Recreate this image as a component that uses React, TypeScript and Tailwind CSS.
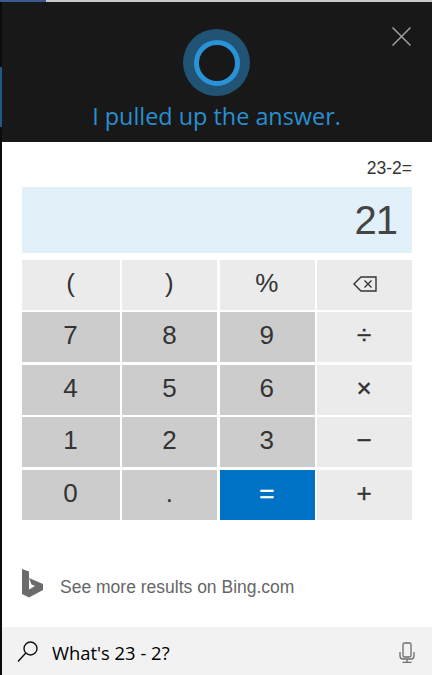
const keys: { label: React.ReactNode; tone: "light" | "dark" | "blue"; cls?: string }[] = [
  { label: "(", tone: "light" },
  { label: ")", tone: "light" },
  { label: "%", tone: "light" },
  {
    label: (
      <svg className="ml-[2px]" width="24" height="18" viewBox="0 0 24 18" fill="none" stroke="#333" strokeWidth="1.4">
        <path d="M23 2H8L1 9l7 7h15z" />
        <path d="M11.5 5.5l7 7M18.5 5.5l-7 7" />
      </svg>
    ),
    tone: "light",
  },
  { label: "7", tone: "dark" },
  { label: "8", tone: "dark" },
  { label: "9", tone: "dark" },
  { label: "÷", tone: "light", cls: "text-[22px] [-webkit-text-stroke:0.4px_#333333]" },
  { label: "4", tone: "dark" },
  { label: "5", tone: "dark" },
  { label: "6", tone: "dark" },
  { label: "×", tone: "light", cls: "text-[22px] [-webkit-text-stroke:0.4px_#333333]" },
  { label: "1", tone: "dark" },
  { label: "2", tone: "dark" },
  { label: "3", tone: "dark" },
  { label: "−", tone: "light", cls: "text-[22px] [-webkit-text-stroke:0.4px_#333333]" },
  { label: "0", tone: "dark" },
  { label: ".", tone: "dark" },
  { label: "=", tone: "blue", cls: "text-[22px] [-webkit-text-stroke:0.4px_#ffffff]" },
  { label: "+", tone: "light", cls: "text-[22px] [-webkit-text-stroke:0.4px_#333333]" },
];

const toneClass = {
  light: "bg-[#ebebeb] text-[#333333]",
  dark: "bg-[#cccccc] text-[#333333]",
  blue: "bg-[#0072c6] text-white",
};

export default function App() {
  return (
    <div className="w-[432px] h-[675px] overflow-hidden flex flex-col bg-white font-['Liberation_Sans',Arial,sans-serif]">
      <div className="flex h-[2px] shrink-0">
        <div className="w-[46px] bg-[#3a5a94]" />
        <div className="flex-1 bg-[#c9c9c9]" />
      </div>
      <div className="flex flex-1 min-h-0">
        <div className="w-[2px] shrink-0 flex flex-col bg-[#0b0b0b]">
          <div className="h-[65px]" />
          <div className="h-[60px] bg-[#1f5a86]" />
        </div>
        <div className="flex-1 min-w-0 flex flex-col">
          <header className="relative h-[140px] shrink-0 bg-[#181818] flex flex-col items-center pr-[1px]">
            <div className="mt-[27px] w-[67px] h-[67px] rounded-full bg-[#215374] flex items-center justify-center">
              <div className="w-[46px] h-[46px] rounded-full border-[5px] border-[#2a93d5] bg-[#181818]" />
            </div>
            <div className="mt-[4px] text-[23.4px] leading-[32px] text-[#2a8fd0] font-['Open_Sans',sans-serif]">
              I pulled up the answer.
            </div>
            <svg className="absolute left-[390px] top-[25px]" width="19" height="19" viewBox="0 0 19 19" stroke="#a0a0a0" strokeWidth="1.5">
              <path d="M0.5 0.5l18 18M18.5 0.5l-18 18" />
            </svg>
          </header>

          <main className="flex-1 flex flex-col pl-[20px] pr-[20px]">
            <div className="h-[45px] flex items-center justify-end pt-[7px] text-[17.5px] text-[#333333]">23-2=</div>
            <div className="h-[66px] bg-[#e2f0f9] flex items-center justify-end pr-[15px] text-[40px] tracking-[-1px] text-[#444444]">21</div>
            <div className="mt-[7px] grid grid-cols-[98px_95px_95px_95px] auto-rows-[50px] gap-[2.4px]">
              {keys.map((k, i) => (
                <div key={i} className={`flex items-center justify-center pb-[3px] pr-[1px] text-[26px] ${toneClass[k.tone]} ${k.cls ?? ""}`}>
                  {k.label}
                </div>
              ))}
            </div>
            <div className="mt-[49px] flex items-start">
              <svg width="22" height="29" viewBox="0 0 22 29" className="shrink-0">
                <path fill="#6b6b6b" d="M0 0l7 2.5v18l6-3.4-3.5-1.6-2.5-6.5L21 15v6L7 28.5 0 25z" />
              </svg>
              <span className="ml-[16px] mt-[8px] text-[17.5px] leading-[20px] text-[#666666]">See more results on Bing.com</span>
            </div>
          </main>

          <footer className="h-[48px] shrink-0 bg-[#f2f2f2] flex items-center pt-[2px]">
            <svg className="ml-[15px] shrink-0" width="21" height="22" viewBox="0 0 21 22" fill="none" stroke="#111" strokeWidth="1.4">
              <circle cx="13.5" cy="7.5" r="6.5" />
              <path d="M8.8 12L1 20.5" />
            </svg>
            <span className="ml-[14px] pt-[1px] text-[18.4px] text-black font-['Open_Sans',sans-serif]">What's 23 - 2?</span>
            <svg className="ml-auto mr-[17px] shrink-0" width="16" height="21" viewBox="0 0 16 21" fill="none" stroke="#6e6e6e" strokeWidth="1.3">
              <rect x="4" y="1" width="8" height="14" rx="1.5" />
              <path d="M1 10v4a3 3 0 0 0 3 3h8a3 3 0 0 0 3-3v-4" />
              <path d="M8 17v3M3.5 20.4h9" />
            </svg>
          </footer>
        </div>
      </div>
    </div>
  );
}
